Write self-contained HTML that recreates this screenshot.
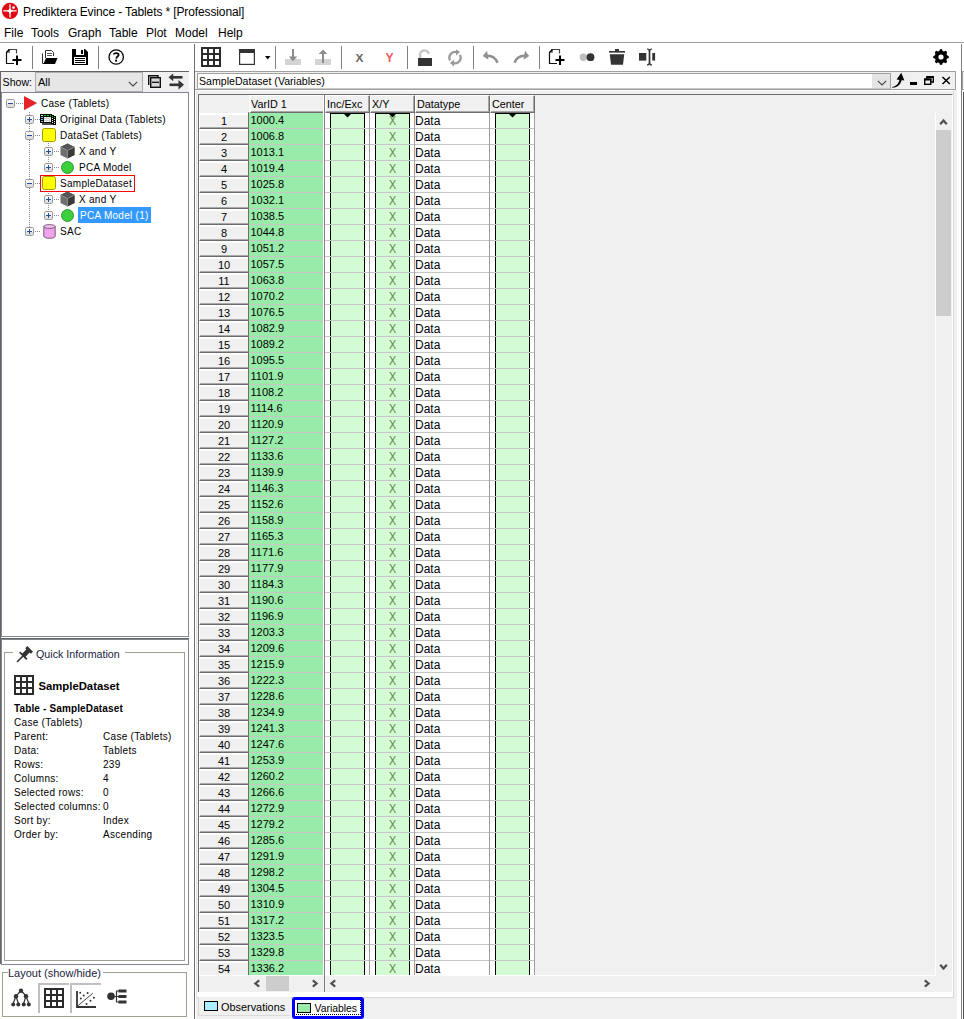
<!DOCTYPE html>
<html><head><meta charset="utf-8"><style>
*{box-sizing:border-box}
html,body{margin:0;padding:0}
body{width:964px;height:1019px;overflow:hidden;background:#fff;position:relative;font-family:"Liberation Sans",sans-serif;color:#000;font-size:11px;line-height:11px}
.a,div,svg{position:absolute}
.t{white-space:pre}
/* grid */
.rh{left:199px;width:49px;height:16px;background:#f0f0f0;border-top:2px solid #fff;border-left:1px solid #fff;border-bottom:1px solid #6d6d6d;box-shadow:inset 0 -1px 0 #a8a8a8;text-align:center;font-size:11px;line-height:13px;padding-top:0px}
.gc{left:249px;width:74px;height:16px;padding-left:1.5px;font-size:11px;line-height:15px}
.xy{left:376px;width:33px;height:16px;text-align:center;color:#62823f;font-size:12.4px;line-height:16px;transform:scaleX(0.86)}
.dt{left:415px;width:74px;height:16px;padding-left:0px;font-size:12px;line-height:16px}
.hd{top:95px;height:18px;background:#f0f0f0;border-top:1px solid #fff;border-left:1px solid #fff;border-right:1px solid #a0a0a0;border-bottom:1px solid #a0a0a0;font-size:11px;line-height:14px;padding-left:1px}
.sep{background:#a0a0a0;width:1px}
.tr{font-size:10px;line-height:12px;letter-spacing:0.28px;white-space:pre}
.qi{font-size:10px;line-height:12px;letter-spacing:0.3px;white-space:pre;left:14px}
.qv{font-size:10px;line-height:12px;letter-spacing:0.3px;white-space:pre;left:103px}

</style></head><body>
<!-- TITLE -->
<svg style="left:0px;top:0px" width="21" height="21" viewBox="0 0 21 21"><circle cx="10" cy="10.9" r="8.1" fill="#e30613"/><path d="M9.35 4.3 L10.65 4.3 L10.65 8.2 Q10.65 10.3 12.9 10.3 L16.7 10.3 L16.7 11.6 L12.9 11.6 Q10.65 11.6 10.65 13.8 L10.65 17.5 L9.35 17.5 L9.35 13.8 Q9.35 11.6 7.1 11.6 L3.2 11.6 L3.2 10.3 L7.1 10.3 Q9.35 10.3 9.35 8.2 Z" fill="#fff"/><circle cx="13.5" cy="7.6" r="1.4" fill="#fff"/></svg>
<div class="t" style="left:23px;top:6px;font-size:12px;line-height:12px;letter-spacing:-0.12px;color:#000">Prediktera Evince - Tablets * [Professional]</div>
<!-- MENU -->
<div class="t" style="left:4px;top:27px;font-size:12px;line-height:12px">File</div>
<div class="t" style="left:31px;top:27px;font-size:12px;line-height:12px">Tools</div>
<div class="t" style="left:68px;top:27px;font-size:12px;line-height:12px">Graph</div>
<div class="t" style="left:109px;top:27px;font-size:12px;line-height:12px">Table</div>
<div class="t" style="left:146px;top:27px;font-size:12px;line-height:12px">Plot</div>
<div class="t" style="left:175px;top:27px;font-size:12px;line-height:12px">Model</div>
<div class="t" style="left:218px;top:27px;font-size:12px;line-height:12px">Help</div>
<div style="left:0;top:42px;width:964px;height:1px;background:#a0a0a0"></div>

<!-- LEFT TOOLBAR -->
<svg style="left:4px;top:47px" width="20" height="20" viewBox="0 0 20 20">
 <path d="M5 6 L5 2.5 L12.5 2.5 L12.5 6.5" fill="none" stroke="#444" stroke-width="1.2"/>
 <path d="M2.5 5.5 L5.5 2.5" stroke="#000" stroke-width="1.6"/>
 <path d="M2.5 5 L2.5 16.5 L10 16.5" fill="none" stroke="#111" stroke-width="1.2"/>
 <path d="M13 8.5 V18 M8.5 13 H17.5" stroke="#000" stroke-width="2"/>
</svg>
<div style="left:32px;top:46px;width:1px;height:23px;background:#808080"></div>
<svg style="left:42px;top:49px" width="16" height="16" viewBox="0 0 16 16">
 <path d="M3.5 9 V1.5 H9.5 L11.5 3.5 V7" fill="#fff" stroke="#333" stroke-width="1"/>
 <path d="M5 4.5 H10 M5 6.5 H10" stroke="#555" stroke-width="1"/>
 <path d="M0.5 4.5 V14.5 H2" fill="none" stroke="#333" stroke-width="1"/>
 <path d="M1.5 15 L4 9 H15.5 L13 15 Z" fill="#000"/>
</svg>
<svg style="left:72px;top:49px" width="16" height="16" viewBox="0 0 16 16">
 <path d="M0 0 H13 L16 3 V16 H0 Z" fill="#000"/>
 <rect x="4" y="0" width="8" height="6" fill="#fff"/>
 <rect x="9" y="1" width="2" height="4" fill="#000"/>
 <rect x="2" y="8" width="12" height="7" fill="#fff"/>
 <path d="M3 9.5 H13 M3 11.5 H13 M3 13.5 H13" stroke="#000" stroke-width="1"/>
</svg>
<div style="left:98px;top:46px;width:1px;height:23px;background:#808080"></div>
<svg style="left:108px;top:49px" width="17" height="17" viewBox="0 0 17 17">
 <circle cx="8.2" cy="8" r="7.2" fill="none" stroke="#000" stroke-width="1.3"/>
 <path d="M5.8 5.6 C5.8 3.6 10.8 3.4 10.6 5.9 C10.5 7.3 8.6 7.6 8.3 9.6" fill="none" stroke="#000" stroke-width="1.8"/>
 <circle cx="8.1" cy="11.7" r="1.1" fill="#000"/>
</svg>

<!-- LEFT PANEL -->
<div style="left:0;top:71px;width:189px;height:1px;background:#646464"></div>
<div style="left:0;top:72px;width:189px;height:20px;background:#f0f0f0"></div>
<div class="t" style="left:2.6px;top:77px;font-size:10.6px;line-height:11px">Show:</div>
<div style="left:35px;top:72px;width:108px;height:20px;background:#e6e6e6;border:1px solid #adadad"></div>
<div class="t" style="left:38px;top:77px;font-size:11px;line-height:11px">All</div>
<svg style="left:128px;top:81px" width="10" height="6" viewBox="0 0 10 6"><path d="M0.8 0.8 L5 5 L9.2 0.8" fill="none" stroke="#444" stroke-width="1.1"/></svg>
<svg style="left:147px;top:74px" width="15" height="15" viewBox="0 0 15 15">
 <path d="M1.7 11 V1.7 H11 V3" fill="none" stroke="#111" stroke-width="1.4"/>
 <rect x="3.7" y="3.7" width="9.6" height="9.6" fill="#d8d8d8" stroke="#111" stroke-width="1.4"/>
 <path d="M5 8.3 H12" stroke="#111" stroke-width="1.3"/>
</svg>
<svg style="left:168px;top:73px" width="17" height="17" viewBox="0 0 17 17">
 <path d="M3.5 4.3 H14.5" stroke="#333" stroke-width="2.6"/>
 <path d="M0.5 4.3 L5.2 0.4 V8.2 Z" fill="#333"/>
 <path d="M1.5 11.8 H12.5" stroke="#333" stroke-width="2.6"/>
 <path d="M16 11.8 L10.5 7 V16.6 Z" fill="#333"/>
</svg>
<!-- tree frame -->
<div style="left:0;top:72px;width:1px;height:892px;background:#646464"></div>
<div style="left:1px;top:92px;width:188px;height:545px;border:1px solid #828790;background:#fff"></div>
<!-- TREE -->
<div style="left:29px;top:112px;width:1px;height:120px;background:repeating-linear-gradient(180deg,#8a8a8a 0 1px,transparent 1px 2px)"></div>
<div style="left:48px;top:143px;width:1px;height:25px;background:repeating-linear-gradient(180deg,#8a8a8a 0 1px,transparent 1px 2px)"></div>
<div style="left:48px;top:191px;width:1px;height:25px;background:repeating-linear-gradient(180deg,#8a8a8a 0 1px,transparent 1px 2px)"></div>
<svg style="left:6px;top:99px" width="9" height="9" viewBox="0 0 9 9"><rect x="0.5" y="0.5" width="8" height="8" rx="1" fill="#f4f4f4" stroke="#9a9a9a" stroke-width="1"/><rect x="1" y="5" width="7" height="3" fill="#dedede"/><path d="M2 4.5 H7" stroke="#2b4c9a" stroke-width="1"/></svg>
<div style="left:16px;top:103px;width:7px;height:1px;background:repeating-linear-gradient(90deg,#8a8a8a 0 1px,transparent 1px 2px)"></div>
<svg style="left:23px;top:95px" width="16" height="17" viewBox="0 0 16 17"><path d="M1.5 1.5 L14.5 8.2 L1.5 15.5 Z" fill="#9a9a9a" opacity="0.5"/><path d="M1 1 L14 8 L1 15 Z" fill="#e8222b"/></svg>
<div class="tr" style="left:41px;top:97.5px;">Case (Tablets)</div>
<svg style="left:25px;top:115px" width="9" height="9" viewBox="0 0 9 9"><rect x="0.5" y="0.5" width="8" height="8" rx="1" fill="#f4f4f4" stroke="#9a9a9a" stroke-width="1"/><rect x="1" y="5" width="7" height="3" fill="#dedede"/><path d="M2 4.5 H7" stroke="#2b4c9a" stroke-width="1"/><path d="M4.5 2 V7" stroke="#2b4c9a" stroke-width="1"/></svg>
<div style="left:35px;top:119px;width:5px;height:1px;background:repeating-linear-gradient(90deg,#8a8a8a 0 1px,transparent 1px 2px)"></div>
<svg style="left:40px;top:114px" width="16" height="11" viewBox="0 0 16 11" shape-rendering="crispEdges"><rect x="2" y="9" width="13" height="2" fill="#505050"/><rect x="13" y="2" width="3" height="9" fill="#000"/><rect x="14" y="3" width="1" height="1" fill="#00e000"/><rect x="14" y="5" width="1" height="1" fill="#fff"/><rect x="14" y="7" width="1" height="1" fill="#fff"/><rect x="14" y="9" width="1" height="1" fill="#fff"/><rect x="11" y="1" width="3" height="9" fill="#000"/><rect x="12" y="2" width="1" height="1" fill="#00e000"/><rect x="12" y="4" width="1" height="1" fill="#fff"/><rect x="12" y="6" width="1" height="1" fill="#fff"/><rect x="12" y="8" width="1" height="1" fill="#fff"/><rect x="0" y="0" width="12" height="9" fill="#000"/><rect x="1" y="1" width="2" height="1" fill="#e8e8e8"/><rect x="4" y="1" width="2" height="1" fill="#00e000"/><rect x="7" y="1" width="2" height="1" fill="#00e000"/><rect x="10" y="1" width="1" height="1" fill="#00e000"/><rect x="1" y="3" width="2" height="1" fill="#60c0ff"/><rect x="1" y="5" width="2" height="1" fill="#60c0ff"/><rect x="1" y="7" width="2" height="1" fill="#60c0ff"/><rect x="4" y="3" width="7" height="5" fill="#fff"/><rect x="4" y="4" width="7" height="1" fill="#d0d0d0"/><rect x="4" y="6" width="7" height="1" fill="#d0d0d0"/><rect x="6" y="3" width="1" height="5" fill="#d0d0d0"/><rect x="9" y="3" width="1" height="5" fill="#d0d0d0"/></svg>
<div class="tr" style="left:60px;top:113.5px;">Original Data (Tablets)</div>
<svg style="left:25px;top:131px" width="9" height="9" viewBox="0 0 9 9"><rect x="0.5" y="0.5" width="8" height="8" rx="1" fill="#f4f4f4" stroke="#9a9a9a" stroke-width="1"/><rect x="1" y="5" width="7" height="3" fill="#dedede"/><path d="M2 4.5 H7" stroke="#2b4c9a" stroke-width="1"/></svg>
<div style="left:35px;top:135px;width:5px;height:1px;background:repeating-linear-gradient(90deg,#8a8a8a 0 1px,transparent 1px 2px)"></div>
<svg style="left:42px;top:128px" width="14" height="14" viewBox="0 0 14 14"><rect x="0.5" y="0.5" width="13" height="13" rx="2" fill="#ffff00" stroke="#a09c00" stroke-width="1"/></svg>
<div class="tr" style="left:60px;top:129.5px;">DataSet (Tablets)</div>
<svg style="left:44px;top:147px" width="9" height="9" viewBox="0 0 9 9"><rect x="0.5" y="0.5" width="8" height="8" rx="1" fill="#f4f4f4" stroke="#9a9a9a" stroke-width="1"/><rect x="1" y="5" width="7" height="3" fill="#dedede"/><path d="M2 4.5 H7" stroke="#2b4c9a" stroke-width="1"/><path d="M4.5 2 V7" stroke="#2b4c9a" stroke-width="1"/></svg>
<div style="left:54px;top:151px;width:6px;height:1px;background:repeating-linear-gradient(90deg,#8a8a8a 0 1px,transparent 1px 2px)"></div>
<svg style="left:60px;top:143px" width="15" height="16" viewBox="0 0 15 16"><path d="M7.5 0.5 L14.5 4 L14.5 12 L7.5 15.5 L0.5 12 L0.5 4 Z" fill="#6e6e6e"/><path d="M7.5 0.5 L14.5 4 L7.5 7.5 L0.5 4 Z" fill="#555"/><path d="M7.5 7.5 L14.5 4 L14.5 12 L7.5 15.5 Z" fill="#3a3a3a"/><path d="M0.5 4 L7.5 7.5 L14.5 4 M7.5 7.5 V15.5" fill="none" stroke="#9a9a9a" stroke-width="0.8"/></svg>
<div class="tr" style="left:79px;top:145.5px;">X and Y</div>
<svg style="left:44px;top:163px" width="9" height="9" viewBox="0 0 9 9"><rect x="0.5" y="0.5" width="8" height="8" rx="1" fill="#f4f4f4" stroke="#9a9a9a" stroke-width="1"/><rect x="1" y="5" width="7" height="3" fill="#dedede"/><path d="M2 4.5 H7" stroke="#2b4c9a" stroke-width="1"/><path d="M4.5 2 V7" stroke="#2b4c9a" stroke-width="1"/></svg>
<div style="left:54px;top:167px;width:6px;height:1px;background:repeating-linear-gradient(90deg,#8a8a8a 0 1px,transparent 1px 2px)"></div>
<svg style="left:61px;top:161px" width="13" height="13" viewBox="0 0 13 13"><circle cx="6.5" cy="6.5" r="6" fill="#3cd03c" stroke="#2a8a2a" stroke-width="0.9"/></svg>
<div class="tr" style="left:79px;top:161.5px;">PCA Model</div>
<svg style="left:25px;top:179px" width="9" height="9" viewBox="0 0 9 9"><rect x="0.5" y="0.5" width="8" height="8" rx="1" fill="#f4f4f4" stroke="#9a9a9a" stroke-width="1"/><rect x="1" y="5" width="7" height="3" fill="#dedede"/><path d="M2 4.5 H7" stroke="#2b4c9a" stroke-width="1"/></svg>
<div style="left:35px;top:183px;width:5px;height:1px;background:repeating-linear-gradient(90deg,#8a8a8a 0 1px,transparent 1px 2px)"></div>
<div style="left:40px;top:175px;width:95px;height:17px;border:1px solid #ff0000"></div>
<svg style="left:42px;top:176px" width="14" height="14" viewBox="0 0 14 14"><rect x="0.5" y="0.5" width="13" height="13" rx="2" fill="#ffff00" stroke="#a09c00" stroke-width="1"/></svg>
<div class="tr" style="left:60px;top:177.5px;">SampleDataset</div>
<svg style="left:44px;top:195px" width="9" height="9" viewBox="0 0 9 9"><rect x="0.5" y="0.5" width="8" height="8" rx="1" fill="#f4f4f4" stroke="#9a9a9a" stroke-width="1"/><rect x="1" y="5" width="7" height="3" fill="#dedede"/><path d="M2 4.5 H7" stroke="#2b4c9a" stroke-width="1"/><path d="M4.5 2 V7" stroke="#2b4c9a" stroke-width="1"/></svg>
<div style="left:54px;top:199px;width:6px;height:1px;background:repeating-linear-gradient(90deg,#8a8a8a 0 1px,transparent 1px 2px)"></div>
<svg style="left:60px;top:191px" width="15" height="16" viewBox="0 0 15 16"><path d="M7.5 0.5 L14.5 4 L14.5 12 L7.5 15.5 L0.5 12 L0.5 4 Z" fill="#6e6e6e"/><path d="M7.5 0.5 L14.5 4 L7.5 7.5 L0.5 4 Z" fill="#555"/><path d="M7.5 7.5 L14.5 4 L14.5 12 L7.5 15.5 Z" fill="#3a3a3a"/><path d="M0.5 4 L7.5 7.5 L14.5 4 M7.5 7.5 V15.5" fill="none" stroke="#9a9a9a" stroke-width="0.8"/></svg>
<div class="tr" style="left:79px;top:193.5px;">X and Y</div>
<svg style="left:44px;top:211px" width="9" height="9" viewBox="0 0 9 9"><rect x="0.5" y="0.5" width="8" height="8" rx="1" fill="#f4f4f4" stroke="#9a9a9a" stroke-width="1"/><rect x="1" y="5" width="7" height="3" fill="#dedede"/><path d="M2 4.5 H7" stroke="#2b4c9a" stroke-width="1"/><path d="M4.5 2 V7" stroke="#2b4c9a" stroke-width="1"/></svg>
<div style="left:54px;top:215px;width:6px;height:1px;background:repeating-linear-gradient(90deg,#8a8a8a 0 1px,transparent 1px 2px)"></div>
<svg style="left:61px;top:209px" width="13" height="13" viewBox="0 0 13 13"><circle cx="6.5" cy="6.5" r="6" fill="#3cd03c" stroke="#2a8a2a" stroke-width="0.9"/></svg>
<div style="left:78px;top:207px;width:73px;height:16px;background:#3399ff"></div>
<div class="tr" style="left:80px;top:209.5px;color:#fff">PCA Model (1)</div>
<svg style="left:25px;top:227px" width="9" height="9" viewBox="0 0 9 9"><rect x="0.5" y="0.5" width="8" height="8" rx="1" fill="#f4f4f4" stroke="#9a9a9a" stroke-width="1"/><rect x="1" y="5" width="7" height="3" fill="#dedede"/><path d="M2 4.5 H7" stroke="#2b4c9a" stroke-width="1"/><path d="M4.5 2 V7" stroke="#2b4c9a" stroke-width="1"/></svg>
<div style="left:35px;top:231px;width:5px;height:1px;background:repeating-linear-gradient(90deg,#8a8a8a 0 1px,transparent 1px 2px)"></div>
<svg style="left:42.5px;top:224px" width="13" height="15" viewBox="0 0 13 15"><path d="M0.8 2.5 V12.3 A5.7 2 0 0 0 12.2 12.3 V2.5" fill="#f0a4ec" stroke="#6a506a" stroke-width="0.9"/><ellipse cx="6.5" cy="2.5" rx="5.7" ry="1.9" fill="#f6c0f2" stroke="#6a506a" stroke-width="0.9"/></svg>
<div class="tr" style="left:60px;top:225.5px;">SAC</div>
<!-- QUICK INFO frame -->
<div style="left:1px;top:638px;width:188px;height:1px;background:#646464"></div>
<div style="left:1px;top:639px;width:188px;height:326px;border:1px solid #828790;border-top-color:#828790;background:#fff"></div>
<div style="left:4px;top:652px;width:181px;height:309px;border:1px solid #a0a090;border-top:none"></div>
<div style="left:4px;top:652px;width:9px;height:1px;background:#a0a090"></div>
<div style="left:125px;top:652px;width:60px;height:1px;background:#a0a090"></div>
<svg style="left:16px;top:645px" width="18" height="18" viewBox="0 0 18 18">
<path d="M3.12 7.81 L4.39 6.53 L6.3 8.44 L10.4 4.34 L9.2 3.14 L11.32 1.02 L16.98 6.68 L14.86 8.8 L13.66 7.6 L9.56 11.7 L11.47 13.61 L10.19 14.88 Z" fill="#333"/>
<path d="M7.6 10.4 L1 17" stroke="#333" stroke-width="1.5"/>
</svg>
<div class="t" style="left:36px;top:647.8px;font-size:10.7px;line-height:12px;color:#1c1c3c">Quick Information</div>
<svg style="left:14px;top:675px" width="20" height="20" viewBox="0 0 20 20">
<path d="M1 1 H19 V19 H1 Z M7 1 V19 M13 1 V19 M1 7 H19 M1 13 H19" fill="none" stroke="#2b2b2b" stroke-width="2"/>
</svg>
<div class="t" style="left:38.5px;top:679.8px;font-size:11.3px;line-height:12px;font-weight:bold">SampleDataset</div>
<div class="t" style="left:14px;top:702.5px;font-size:10px;line-height:12px;letter-spacing:0.14px;font-weight:bold">Table - SampleDataset</div>
<div class="qi" style="top:716.53px">Case (Tablets)</div>
<div class="qi" style="top:730.53px">Parent:</div>
<div class="qv" style="top:730.53px">Case (Tablets)</div>
<div class="qi" style="top:744.53px">Data:</div>
<div class="qv" style="top:744.53px">Tablets</div>
<div class="qi" style="top:758.53px">Rows:</div>
<div class="qv" style="top:758.53px">239</div>
<div class="qi" style="top:772.53px">Columns:</div>
<div class="qv" style="top:772.53px">4</div>
<div class="qi" style="top:786.53px">Selected rows:</div>
<div class="qv" style="top:786.53px">0</div>
<div class="qi" style="top:800.53px">Selected columns:</div>
<div class="qv" style="top:800.53px">0</div>
<div class="qi" style="top:814.53px">Sort by:</div>
<div class="qv" style="top:814.53px">Index</div>
<div class="qi" style="top:828.53px">Order by:</div>
<div class="qv" style="top:828.53px">Ascending</div>
<!-- LAYOUT -->
<div style="left:2px;top:972px;width:185px;height:45px;border:1px solid #a0a090;border-top:none"></div>
<div style="left:2px;top:972px;width:6px;height:1px;background:#a0a090"></div>
<div style="left:103px;top:972px;width:84px;height:1px;background:#a0a090"></div>
<div class="t" style="left:8px;top:966.5px;font-size:11px;line-height:12px;color:#1c1c3c">Layout (show/hide)</div>
<svg style="left:11px;top:988px" width="20" height="20" viewBox="0 0 20 20">
 <path d="M10 2.5 L5 8 L2 16 M5 8 L7.5 16 M10 2.5 L15 8 L12.5 16 M15 8 L18 16" fill="none" stroke="#333" stroke-width="1.2"/>
 <circle cx="10" cy="2.8" r="2.2" fill="#333"/><circle cx="5" cy="8.3" r="2.2" fill="#333"/><circle cx="15" cy="8.3" r="2.2" fill="#333"/>
 <circle cx="2.2" cy="16.5" r="2" fill="#333"/><circle cx="7.3" cy="16.5" r="2" fill="#333"/><circle cx="12.7" cy="16.5" r="2" fill="#333"/><circle cx="17.8" cy="16.5" r="2" fill="#333"/>
</svg>
<div style="left:38px;top:983px;width:31px;height:30px;border-left:2px solid #c0c0c0;border-top:2px solid #c0c0c0"></div>
<svg style="left:44px;top:988px" width="20" height="20" viewBox="0 0 20 20">
<path d="M1 1 H19 V19 H1 Z M7 1 V19 M13 1 V19 M1 7 H19 M1 13 H19" fill="none" stroke="#2b2b2b" stroke-width="2"/>
</svg>
<div style="left:70px;top:983px;width:31px;height:30px;border-left:2px solid #c0c0c0;border-top:2px solid #c0c0c0"></div>
<svg style="left:76px;top:991px" width="21" height="17" viewBox="0 0 21 17">
 <path d="M1 0 V16 H20" fill="none" stroke="#333" stroke-width="1.8"/>
 <path d="M1.6 15 L16.8 2.3" stroke="#333" stroke-width="0.9"/>
 <circle cx="4.2" cy="1.7" r="1" fill="#333"/><circle cx="11.6" cy="2" r="1" fill="#333"/><circle cx="7.7" cy="4.5" r="1" fill="#333"/><circle cx="4.8" cy="7.4" r="1" fill="#333"/><circle cx="17.9" cy="6.8" r="1" fill="#333"/><circle cx="14.5" cy="9.7" r="1" fill="#333"/><circle cx="10.5" cy="13.1" r="1" fill="#333"/>
</svg>
<svg style="left:107px;top:989px" width="20" height="15" viewBox="0 0 20 15">
 <circle cx="4" cy="7.3" r="3.8" fill="#333"/>
 <path d="M6 7.5 H9 M9.5 2 V13 M9 2 H12 M9 7.5 H12 M9 13 H12" fill="none" stroke="#333" stroke-width="1.2"/>
 <rect x="11.5" y="0.5" width="8" height="3" fill="#333"/><rect x="11.5" y="6" width="8" height="3" fill="#333"/><rect x="11.5" y="11.5" width="8" height="3" fill="#333"/>
</svg>


<!-- SPLITTER -->
<div style="left:194px;top:44px;width:1px;height:975px;background:#6e6e6e"></div>

<!-- RIGHT TOOLBAR -->
<svg style="left:201px;top:47px" width="20" height="20" viewBox="0 0 20 20">
<path d="M1 1 H19 V19 H1 Z M7 1 V19 M13 1 V19 M1 7 H19 M1 13 H19" fill="none" stroke="#2b2b2b" stroke-width="2"/>
</svg>
<svg style="left:239px;top:49px" width="16" height="16" viewBox="0 0 16 16">
<rect x="0.6" y="0.6" width="14.8" height="14.8" fill="none" stroke="#333" stroke-width="1.2"/>
<rect x="0" y="0" width="16" height="4" fill="#333"/>
</svg>
<svg style="left:265px;top:56px" width="6" height="4" viewBox="0 0 6 4"><path d="M0 0 H5.5 L2.75 3.5 Z" fill="#000"/></svg>
<div style="left:275px;top:46px;width:1px;height:23px;background:#808080"></div>
<svg style="left:285px;top:49px" width="16" height="16" viewBox="0 0 16 16">
<rect x="0" y="10" width="16" height="6" fill="#d4d4d4"/>
<rect x="7" y="0" width="2" height="9" fill="#8c8c8c"/>
<path d="M3.8 7.5 H12.2 L8 12.3 Z" fill="#8c8c8c"/>
</svg>
<svg style="left:315px;top:49px" width="16" height="16" viewBox="0 0 16 16">
<rect x="0" y="10" width="16" height="6" fill="#d4d4d4"/>
<rect x="7" y="4" width="2" height="10" fill="#8c8c8c"/>
<path d="M3.6 5 H12.4 L8 0.5 Z" fill="#8c8c8c"/>
</svg>
<div style="left:341px;top:46px;width:1px;height:23px;background:#808080"></div>
<div class="t" style="left:355.5px;top:51.8px;font-size:11.8px;line-height:12px;font-weight:bold;color:#666">X</div>
<div class="t" style="left:385.5px;top:51.8px;font-size:12.2px;line-height:12px;font-weight:bold;color:#f25a5a">Y</div>
<div style="left:407px;top:46px;width:1px;height:23px;background:#808080"></div>
<svg style="left:417px;top:49px" width="16" height="17" viewBox="0 0 16 17">
<path d="M3.2 9 V6.8 A4.4 4.4 0 0 1 11.8 4.8" fill="none" stroke="#c4c4c4" stroke-width="2.4"/>
<rect x="1" y="9" width="14" height="8" fill="#333"/>
</svg>
<svg style="left:447px;top:49px" width="16" height="18" viewBox="0 0 16 18">
<path d="M3.15 11.4 A5.6 5.6 0 0 1 9.3 3.1" fill="none" stroke="#999" stroke-width="2.3"/>
<path d="M9 0.2 L13 3.1 L9 6.6 Z" fill="#999"/>
<path d="M12.85 5.8 A5.6 5.6 0 0 1 6.7 14.1" fill="none" stroke="#999" stroke-width="2.3"/>
<path d="M7 10.6 L3 14.1 L7 17.6 Z" fill="#999"/>
</svg>
<div style="left:473px;top:46px;width:1px;height:23px;background:#808080"></div>
<svg style="left:482px;top:50px" width="17" height="14" viewBox="0 0 17 14">
<path d="M4.5 5.8 C9 5.5 13.5 7.5 15.5 12.8" fill="none" stroke="#909090" stroke-width="2.5"/>
<path d="M0.8 6 L5 0.8 L6.5 9.8 Z" fill="#909090"/>
</svg>
<svg style="left:513px;top:50px" width="17" height="14" viewBox="0 0 17 14">
<path d="M12.5 5.8 C8 5.5 3.5 7.5 1.5 12.8" fill="none" stroke="#909090" stroke-width="2.5"/>
<path d="M16.2 6 L12 0.8 L10.5 9.8 Z" fill="#909090"/>
</svg>
<div style="left:539px;top:46px;width:1px;height:23px;background:#808080"></div>
<svg style="left:547px;top:47px" width="20" height="20" viewBox="0 0 20 20">
 <path d="M5 6 L5 2.5 L12.5 2.5 L12.5 6.5" fill="none" stroke="#444" stroke-width="1.2"/>
 <path d="M2.5 5.5 L5.5 2.5" stroke="#000" stroke-width="1.6"/>
 <path d="M2.5 5 L2.5 16.5 L10 16.5" fill="none" stroke="#111" stroke-width="1.2"/>
 <path d="M13 8.5 V18 M8.5 13 H17.5" stroke="#000" stroke-width="2"/>
</svg>
<svg style="left:578px;top:52px" width="18" height="10" viewBox="0 0 18 10">
<circle cx="5.4" cy="5.2" r="3.7" fill="#bdbdbd"/><circle cx="12.5" cy="5.2" r="3.9" fill="#333"/>
</svg>
<svg style="left:608px;top:48px" width="18" height="18" viewBox="0 0 18 18">
<rect x="1" y="3" width="16" height="1.6" fill="#333"/>
<rect x="7" y="1" width="4" height="2.5" fill="#333"/>
<path d="M1.8 6.3 H16.2 L15 16.8 H3 Z" fill="#333"/>
</svg>
<svg style="left:639px;top:48px" width="17" height="18" viewBox="0 0 17 18">
<rect x="0" y="5" width="7.3" height="7.6" fill="#333"/>
<rect x="13.3" y="5" width="2.8" height="7.6" fill="#333"/>
<path d="M10.5 2 V16" fill="none" stroke="#333" stroke-width="1.7"/><path d="M8 1 C9.5 1 10.5 1.6 10.5 3.2 C10.5 1.6 11.5 1 13 1 M8 16.9 C9.5 16.9 10.5 16.3 10.5 14.7 C10.5 16.3 11.5 16.9 13 16.9" fill="none" stroke="#333" stroke-width="1.2"/>
</svg>
<svg style="left:931px;top:47px" width="20" height="20" viewBox="0 0 20 20">
<g transform="translate(10 10)">
<circle r="6.2" fill="#000"/>
<path d="M0 0 L6.30 0.00 M0 0 L4.45 4.45 M0 0 L0.00 6.30 M0 0 L-4.45 4.45 M0 0 L-6.30 0.00 M0 0 L-4.45 -4.45 M0 0 L-0.00 -6.30 M0 0 L4.45 -4.45 " stroke="#000" stroke-width="3.2" stroke-linecap="round"/>
<circle r="2.6" fill="#fff"/>
</g>
</svg>


<!-- COMBO ROW -->
<div style="left:195px;top:71px;width:761px;height:1px;background:#a0a0a0"></div>
<div style="left:195px;top:72px;width:761px;height:18px;background:#f0f0f0;border-right:1px solid #a0a0a0;border-bottom:1px solid #a0a0a0"></div>
<div style="left:197px;top:73px;width:694px;height:16px;background:#fff;border:1px solid #a0a0a0;border-bottom-color:#c8c8c8"></div>
<div style="left:872px;top:74px;width:18px;height:14px;background:#e5e5e5"></div>
<svg style="left:877px;top:80px" width="10" height="6" viewBox="0 0 10 6"><path d="M0.8 0.8 L5 5 L9.2 0.8" fill="none" stroke="#444" stroke-width="1.1"/></svg>
<div class="t" style="left:199px;top:76px;font-size:10.6px;line-height:11px">SampleDataset (Variables)</div>
<svg style="left:891px;top:72px" width="15" height="16" viewBox="0 0 15 16">
<path d="M1 15.2 C4.5 14.5 8.2 12 8.6 6.5 L10.8 6.8 C10.2 13 6 15.6 1 15.8 Z" fill="#000"/>
<path d="M5.6 7.6 L10.2 0.8 L13.4 8.4 Z" fill="#000"/>
</svg>
<div style="left:910px;top:82px;width:7px;height:3px;background:#000"></div>
<svg style="left:924px;top:76px" width="10" height="9" viewBox="0 0 10 9">
<path d="M3 2.8 V0.7 H9.3 V6 H6.6" fill="none" stroke="#000" stroke-width="1.4"/>
<rect x="0.7" y="3.2" width="6.1" height="5.1" fill="none" stroke="#000" stroke-width="1.4"/>
<rect x="0" y="2.5" width="7.5" height="2" fill="#000"/>
<rect x="2.3" y="0" width="7.5" height="2" fill="#000"/>
</svg>
<svg style="left:941px;top:76px" width="10" height="9" viewBox="0 0 10 9">
<path d="M1.5 1 L8.8 8 M8.8 1 L1.5 8" stroke="#000" stroke-width="1.5"/>
</svg>


<!-- TAB PAGE -->
<div style="left:195px;top:90px;width:762px;height:929px;background:#f0f0f0"></div><div style="left:195px;top:90px;width:762px;height:1px;background:#fff"></div><div style="left:195px;top:90px;width:1px;height:929px;background:#fff"></div>
<div style="left:196px;top:91px;width:758px;height:907px;background:#f0f0f0;border-left:1px solid #e3e3e3;border-right:1px solid #d9d9d9;border-bottom:1px solid #d9d9d9"></div><div style="left:197px;top:992px;width:756px;height:5px;background:#fff"></div>
<div style="left:198px;top:94px;width:755px;height:898px;background:#f0f0f0;border-top:1px solid #6e6e6e;border-left:1px solid #6e6e6e;border-right:1px solid #fff"></div>
<div style="left:199px;top:95px;width:50px;height:18px;background:#f0f0f0"></div>
<div style="left:249px;top:95px;width:74px;height:18px;background:#f0f0f0;border-top:1px solid #fff;border-left:2px solid #fff;border-bottom:1px solid #6d6d6d;box-shadow:inset 0 -1px 0 #a8a8a8"></div>
<div class="t" style="left:251px;top:98.5px;font-size:10.8px;line-height:11px">VarID 1</div>
<div style="left:325px;top:95px;width:45px;height:18px;background:#f0f0f0;border-top:1px solid #fff;border-left:1px solid #fff;border-right:1px solid #6d6d6d;border-bottom:1px solid #6d6d6d;box-shadow:inset -1px -1px 0 #a8a8a8"></div>
<div class="t" style="left:327px;top:98.5px;font-size:10.8px;line-height:11px">Inc/Exc</div>
<div style="left:370px;top:95px;width:45px;height:18px;background:#f0f0f0;border-top:1px solid #fff;border-left:1px solid #fff;border-right:1px solid #6d6d6d;border-bottom:1px solid #6d6d6d;box-shadow:inset -1px -1px 0 #a8a8a8"></div>
<div class="t" style="left:372px;top:98.5px;font-size:10.8px;line-height:11px">X/Y</div>
<div style="left:415px;top:95px;width:75px;height:18px;background:#f0f0f0;border-top:1px solid #fff;border-left:1px solid #fff;border-right:1px solid #6d6d6d;border-bottom:1px solid #6d6d6d;box-shadow:inset -1px -1px 0 #a8a8a8"></div>
<div class="t" style="left:417px;top:98.5px;font-size:10.8px;line-height:11px">Datatype</div>
<div style="left:490px;top:95px;width:45px;height:18px;background:#f0f0f0;border-top:1px solid #fff;border-left:1px solid #fff;border-right:1px solid #6d6d6d;border-bottom:1px solid #6d6d6d;box-shadow:inset -1px -1px 0 #a8a8a8"></div>
<div class="t" style="left:492px;top:98.5px;font-size:10.8px;line-height:11px">Center</div>
<div style="left:247px;top:113px;width:1px;height:862px;background:#a8a8a8"></div>
<div style="left:248px;top:112px;width:1px;height:863px;background:#6d6d6d;border-top-left-radius:1px"></div>
<div style="left:249px;top:113px;width:74px;height:862px;background:#98eba8"></div>
<div style="left:249px;top:113px;width:74px;height:862px;background:repeating-linear-gradient(180deg,transparent 0 15px,#c6c6c6 15px 16px)"></div>
<div style="left:323px;top:95px;width:1px;height:880px;background:#fff"></div>
<div style="left:324px;top:95px;width:1px;height:897px;background:#808080"></div>
<div style="left:325px;top:113px;width:44px;height:862px;background:#fff"></div>
<div style="left:331px;top:113px;width:33px;height:862px;background:#d4fcd4"></div>
<div style="left:330px;top:113px;width:35px;height:862px;border-left:1px solid #000;border-right:1px solid #000;border-top:1px solid #000"></div>
<div style="left:325px;top:113px;width:44px;height:862px;background:repeating-linear-gradient(180deg,transparent 0 15px,#c6c6c6 15px 16px)"></div>
<svg style="left:343px;top:113px" width="9" height="5" viewBox="0 0 9 5"><path d="M0 0 H9 L4.5 4.5 Z" fill="#000"/></svg>
<div style="left:369px;top:113px;width:1px;height:862px;background:#a0a0a0"></div>
<div style="left:370px;top:113px;width:44px;height:862px;background:#fff"></div>
<div style="left:376px;top:113px;width:33px;height:862px;background:#d4fcd4"></div>
<div style="left:375px;top:113px;width:35px;height:862px;border-left:1px solid #000;border-right:1px solid #000;border-top:1px solid #000"></div>
<div style="left:370px;top:113px;width:44px;height:862px;background:repeating-linear-gradient(180deg,transparent 0 15px,#c6c6c6 15px 16px)"></div>
<svg style="left:388px;top:113px" width="9" height="5" viewBox="0 0 9 5"><path d="M0 0 H9 L4.5 4.5 Z" fill="#000"/></svg>
<div style="left:414px;top:113px;width:1px;height:862px;background:#a0a0a0"></div>
<div style="left:490px;top:113px;width:44px;height:862px;background:#fff"></div>
<div style="left:496px;top:113px;width:33px;height:862px;background:#d4fcd4"></div>
<div style="left:495px;top:113px;width:35px;height:862px;border-left:1px solid #000;border-right:1px solid #000;border-top:1px solid #000"></div>
<div style="left:490px;top:113px;width:44px;height:862px;background:repeating-linear-gradient(180deg,transparent 0 15px,#c6c6c6 15px 16px)"></div>
<svg style="left:508px;top:113px" width="9" height="5" viewBox="0 0 9 5"><path d="M0 0 H9 L4.5 4.5 Z" fill="#000"/></svg>
<div style="left:534px;top:113px;width:1px;height:862px;background:#a0a0a0"></div>
<div style="left:415px;top:113px;width:74px;height:862px;background:#fff"></div>
<div style="left:415px;top:113px;width:74px;height:862px;background:repeating-linear-gradient(180deg,transparent 0 15px,#c6c6c6 15px 16px)"></div>
<div style="left:489px;top:113px;width:1px;height:862px;background:#a0a0a0"></div>
<div class="rh" style="top:113px">1</div>
<div class="gc" style="top:113px">1000.4</div>
<div class="xy" style="top:113px">X</div>
<div class="dt" style="top:113px">Data</div>
<div class="rh" style="top:129px">2</div>
<div class="gc" style="top:129px">1006.8</div>
<div class="xy" style="top:129px">X</div>
<div class="dt" style="top:129px">Data</div>
<div class="rh" style="top:145px">3</div>
<div class="gc" style="top:145px">1013.1</div>
<div class="xy" style="top:145px">X</div>
<div class="dt" style="top:145px">Data</div>
<div class="rh" style="top:161px">4</div>
<div class="gc" style="top:161px">1019.4</div>
<div class="xy" style="top:161px">X</div>
<div class="dt" style="top:161px">Data</div>
<div class="rh" style="top:177px">5</div>
<div class="gc" style="top:177px">1025.8</div>
<div class="xy" style="top:177px">X</div>
<div class="dt" style="top:177px">Data</div>
<div class="rh" style="top:193px">6</div>
<div class="gc" style="top:193px">1032.1</div>
<div class="xy" style="top:193px">X</div>
<div class="dt" style="top:193px">Data</div>
<div class="rh" style="top:209px">7</div>
<div class="gc" style="top:209px">1038.5</div>
<div class="xy" style="top:209px">X</div>
<div class="dt" style="top:209px">Data</div>
<div class="rh" style="top:225px">8</div>
<div class="gc" style="top:225px">1044.8</div>
<div class="xy" style="top:225px">X</div>
<div class="dt" style="top:225px">Data</div>
<div class="rh" style="top:241px">9</div>
<div class="gc" style="top:241px">1051.2</div>
<div class="xy" style="top:241px">X</div>
<div class="dt" style="top:241px">Data</div>
<div class="rh" style="top:257px">10</div>
<div class="gc" style="top:257px">1057.5</div>
<div class="xy" style="top:257px">X</div>
<div class="dt" style="top:257px">Data</div>
<div class="rh" style="top:273px">11</div>
<div class="gc" style="top:273px">1063.8</div>
<div class="xy" style="top:273px">X</div>
<div class="dt" style="top:273px">Data</div>
<div class="rh" style="top:289px">12</div>
<div class="gc" style="top:289px">1070.2</div>
<div class="xy" style="top:289px">X</div>
<div class="dt" style="top:289px">Data</div>
<div class="rh" style="top:305px">13</div>
<div class="gc" style="top:305px">1076.5</div>
<div class="xy" style="top:305px">X</div>
<div class="dt" style="top:305px">Data</div>
<div class="rh" style="top:321px">14</div>
<div class="gc" style="top:321px">1082.9</div>
<div class="xy" style="top:321px">X</div>
<div class="dt" style="top:321px">Data</div>
<div class="rh" style="top:337px">15</div>
<div class="gc" style="top:337px">1089.2</div>
<div class="xy" style="top:337px">X</div>
<div class="dt" style="top:337px">Data</div>
<div class="rh" style="top:353px">16</div>
<div class="gc" style="top:353px">1095.5</div>
<div class="xy" style="top:353px">X</div>
<div class="dt" style="top:353px">Data</div>
<div class="rh" style="top:369px">17</div>
<div class="gc" style="top:369px">1101.9</div>
<div class="xy" style="top:369px">X</div>
<div class="dt" style="top:369px">Data</div>
<div class="rh" style="top:385px">18</div>
<div class="gc" style="top:385px">1108.2</div>
<div class="xy" style="top:385px">X</div>
<div class="dt" style="top:385px">Data</div>
<div class="rh" style="top:401px">19</div>
<div class="gc" style="top:401px">1114.6</div>
<div class="xy" style="top:401px">X</div>
<div class="dt" style="top:401px">Data</div>
<div class="rh" style="top:417px">20</div>
<div class="gc" style="top:417px">1120.9</div>
<div class="xy" style="top:417px">X</div>
<div class="dt" style="top:417px">Data</div>
<div class="rh" style="top:433px">21</div>
<div class="gc" style="top:433px">1127.2</div>
<div class="xy" style="top:433px">X</div>
<div class="dt" style="top:433px">Data</div>
<div class="rh" style="top:449px">22</div>
<div class="gc" style="top:449px">1133.6</div>
<div class="xy" style="top:449px">X</div>
<div class="dt" style="top:449px">Data</div>
<div class="rh" style="top:465px">23</div>
<div class="gc" style="top:465px">1139.9</div>
<div class="xy" style="top:465px">X</div>
<div class="dt" style="top:465px">Data</div>
<div class="rh" style="top:481px">24</div>
<div class="gc" style="top:481px">1146.3</div>
<div class="xy" style="top:481px">X</div>
<div class="dt" style="top:481px">Data</div>
<div class="rh" style="top:497px">25</div>
<div class="gc" style="top:497px">1152.6</div>
<div class="xy" style="top:497px">X</div>
<div class="dt" style="top:497px">Data</div>
<div class="rh" style="top:513px">26</div>
<div class="gc" style="top:513px">1158.9</div>
<div class="xy" style="top:513px">X</div>
<div class="dt" style="top:513px">Data</div>
<div class="rh" style="top:529px">27</div>
<div class="gc" style="top:529px">1165.3</div>
<div class="xy" style="top:529px">X</div>
<div class="dt" style="top:529px">Data</div>
<div class="rh" style="top:545px">28</div>
<div class="gc" style="top:545px">1171.6</div>
<div class="xy" style="top:545px">X</div>
<div class="dt" style="top:545px">Data</div>
<div class="rh" style="top:561px">29</div>
<div class="gc" style="top:561px">1177.9</div>
<div class="xy" style="top:561px">X</div>
<div class="dt" style="top:561px">Data</div>
<div class="rh" style="top:577px">30</div>
<div class="gc" style="top:577px">1184.3</div>
<div class="xy" style="top:577px">X</div>
<div class="dt" style="top:577px">Data</div>
<div class="rh" style="top:593px">31</div>
<div class="gc" style="top:593px">1190.6</div>
<div class="xy" style="top:593px">X</div>
<div class="dt" style="top:593px">Data</div>
<div class="rh" style="top:609px">32</div>
<div class="gc" style="top:609px">1196.9</div>
<div class="xy" style="top:609px">X</div>
<div class="dt" style="top:609px">Data</div>
<div class="rh" style="top:625px">33</div>
<div class="gc" style="top:625px">1203.3</div>
<div class="xy" style="top:625px">X</div>
<div class="dt" style="top:625px">Data</div>
<div class="rh" style="top:641px">34</div>
<div class="gc" style="top:641px">1209.6</div>
<div class="xy" style="top:641px">X</div>
<div class="dt" style="top:641px">Data</div>
<div class="rh" style="top:657px">35</div>
<div class="gc" style="top:657px">1215.9</div>
<div class="xy" style="top:657px">X</div>
<div class="dt" style="top:657px">Data</div>
<div class="rh" style="top:673px">36</div>
<div class="gc" style="top:673px">1222.3</div>
<div class="xy" style="top:673px">X</div>
<div class="dt" style="top:673px">Data</div>
<div class="rh" style="top:689px">37</div>
<div class="gc" style="top:689px">1228.6</div>
<div class="xy" style="top:689px">X</div>
<div class="dt" style="top:689px">Data</div>
<div class="rh" style="top:705px">38</div>
<div class="gc" style="top:705px">1234.9</div>
<div class="xy" style="top:705px">X</div>
<div class="dt" style="top:705px">Data</div>
<div class="rh" style="top:721px">39</div>
<div class="gc" style="top:721px">1241.3</div>
<div class="xy" style="top:721px">X</div>
<div class="dt" style="top:721px">Data</div>
<div class="rh" style="top:737px">40</div>
<div class="gc" style="top:737px">1247.6</div>
<div class="xy" style="top:737px">X</div>
<div class="dt" style="top:737px">Data</div>
<div class="rh" style="top:753px">41</div>
<div class="gc" style="top:753px">1253.9</div>
<div class="xy" style="top:753px">X</div>
<div class="dt" style="top:753px">Data</div>
<div class="rh" style="top:769px">42</div>
<div class="gc" style="top:769px">1260.2</div>
<div class="xy" style="top:769px">X</div>
<div class="dt" style="top:769px">Data</div>
<div class="rh" style="top:785px">43</div>
<div class="gc" style="top:785px">1266.6</div>
<div class="xy" style="top:785px">X</div>
<div class="dt" style="top:785px">Data</div>
<div class="rh" style="top:801px">44</div>
<div class="gc" style="top:801px">1272.9</div>
<div class="xy" style="top:801px">X</div>
<div class="dt" style="top:801px">Data</div>
<div class="rh" style="top:817px">45</div>
<div class="gc" style="top:817px">1279.2</div>
<div class="xy" style="top:817px">X</div>
<div class="dt" style="top:817px">Data</div>
<div class="rh" style="top:833px">46</div>
<div class="gc" style="top:833px">1285.6</div>
<div class="xy" style="top:833px">X</div>
<div class="dt" style="top:833px">Data</div>
<div class="rh" style="top:849px">47</div>
<div class="gc" style="top:849px">1291.9</div>
<div class="xy" style="top:849px">X</div>
<div class="dt" style="top:849px">Data</div>
<div class="rh" style="top:865px">48</div>
<div class="gc" style="top:865px">1298.2</div>
<div class="xy" style="top:865px">X</div>
<div class="dt" style="top:865px">Data</div>
<div class="rh" style="top:881px">49</div>
<div class="gc" style="top:881px">1304.5</div>
<div class="xy" style="top:881px">X</div>
<div class="dt" style="top:881px">Data</div>
<div class="rh" style="top:897px">50</div>
<div class="gc" style="top:897px">1310.9</div>
<div class="xy" style="top:897px">X</div>
<div class="dt" style="top:897px">Data</div>
<div class="rh" style="top:913px">51</div>
<div class="gc" style="top:913px">1317.2</div>
<div class="xy" style="top:913px">X</div>
<div class="dt" style="top:913px">Data</div>
<div class="rh" style="top:929px">52</div>
<div class="gc" style="top:929px">1323.5</div>
<div class="xy" style="top:929px">X</div>
<div class="dt" style="top:929px">Data</div>
<div class="rh" style="top:945px">53</div>
<div class="gc" style="top:945px">1329.8</div>
<div class="xy" style="top:945px">X</div>
<div class="dt" style="top:945px">Data</div>
<div class="rh" style="top:961px">54</div>
<div class="gc" style="top:961px">1336.2</div>
<div class="xy" style="top:961px">X</div>
<div class="dt" style="top:961px">Data</div>
<div style="left:199px;top:975px;width:125px;height:1px;background:#fff"></div>
<div style="left:325px;top:975px;width:610px;height:1px;background:#fff"></div>
<div style="left:199px;top:976px;width:125px;height:16px;background:#f0f0f0"></div>
<svg style="left:253px;top:979px" width="8" height="9" viewBox="0 0 8 9"><path d="M6.2 1.3 L2.4 4.5 L6.2 7.7" fill="none" stroke="#505050" stroke-width="2.2"/></svg>
<div style="left:266px;top:976px;width:23px;height:15px;background:#cdcdcd"></div>
<svg style="left:311px;top:979px" width="8" height="9" viewBox="0 0 8 9"><path d="M1.8 1.3 L5.6 4.5 L1.8 7.7" fill="none" stroke="#505050" stroke-width="2.2"/></svg>
<svg style="left:329px;top:979px" width="8" height="9" viewBox="0 0 8 9"><path d="M6.2 1.3 L2.4 4.5 L6.2 7.7" fill="none" stroke="#505050" stroke-width="2.2"/></svg>
<svg style="left:923px;top:978.5px" width="8" height="9" viewBox="0 0 8 9"><path d="M1.8 1.3 L5.6 4.5 L1.8 7.7" fill="none" stroke="#505050" stroke-width="2.2"/></svg>
<!-- vertical -->
<div style="left:935px;top:113px;width:1px;height:863px;background:#fff"></div>
<svg style="left:939px;top:118px" width="9" height="8" viewBox="0 0 9 8"><path d="M1.2 6.3 L4.5 2.5 L7.8 6.3" fill="none" stroke="#505050" stroke-width="2.2"/></svg>
<div style="left:936px;top:130px;width:15px;height:186px;background:#cdcdcd"></div>
<svg style="left:939px;top:962.5px" width="9" height="8" viewBox="0 0 9 8"><path d="M1.2 1.7 L4.5 5.5 L7.8 1.7" fill="none" stroke="#505050" stroke-width="2.2"/></svg>

<div style="left:198px;top:997px;width:92px;height:19px;background:#f0f0f0;border-left:1px solid #d9d9d9;border-bottom:1px solid #d9d9d9"></div>
<div style="left:204px;top:1001px;width:14px;height:10px;background:#a8f0fc;border:1px solid #000"></div>
<div class="t" style="left:221px;top:1001.5px;font-size:10.9px;line-height:11px">Observations</div>
<div style="left:292px;top:997px;width:72px;height:22px;background:#fff;border:3px solid #0000fa;border-radius:3px"></div>
<div style="left:296px;top:1014px;width:65px;height:1px;background:repeating-linear-gradient(90deg,#000 0 1px,transparent 1px 2px)"></div><div style="left:360px;top:1000px;width:1px;height:15px;background:repeating-linear-gradient(180deg,#000 0 1px,transparent 1px 2px)"></div>
<div style="left:297px;top:1003px;width:14px;height:10px;background:#98eba8;border:1px solid #000"></div>
<div class="t" style="left:314.5px;top:1002.5px;font-size:10.4px;line-height:11px">Variables</div>

<div style="left:954px;top:90px;width:3px;height:929px;background:#f0f0f0"></div>
<div style="left:957px;top:44px;width:4px;height:975px;background:#fff"></div>
<div style="left:961px;top:44px;width:1px;height:975px;background:#808080"></div>
<div style="left:962px;top:44px;width:1px;height:975px;background:#fff"></div>
<div style="left:963px;top:92px;width:1px;height:927px;background:#505050"></div>
<div style="left:962px;top:71px;width:2px;height:19px;border-left:1px solid #a0a0a0;border-top:1px solid #a0a0a0;border-bottom:1px solid #a0a0a0;background:#f0f0f0"></div>


</body></html>
